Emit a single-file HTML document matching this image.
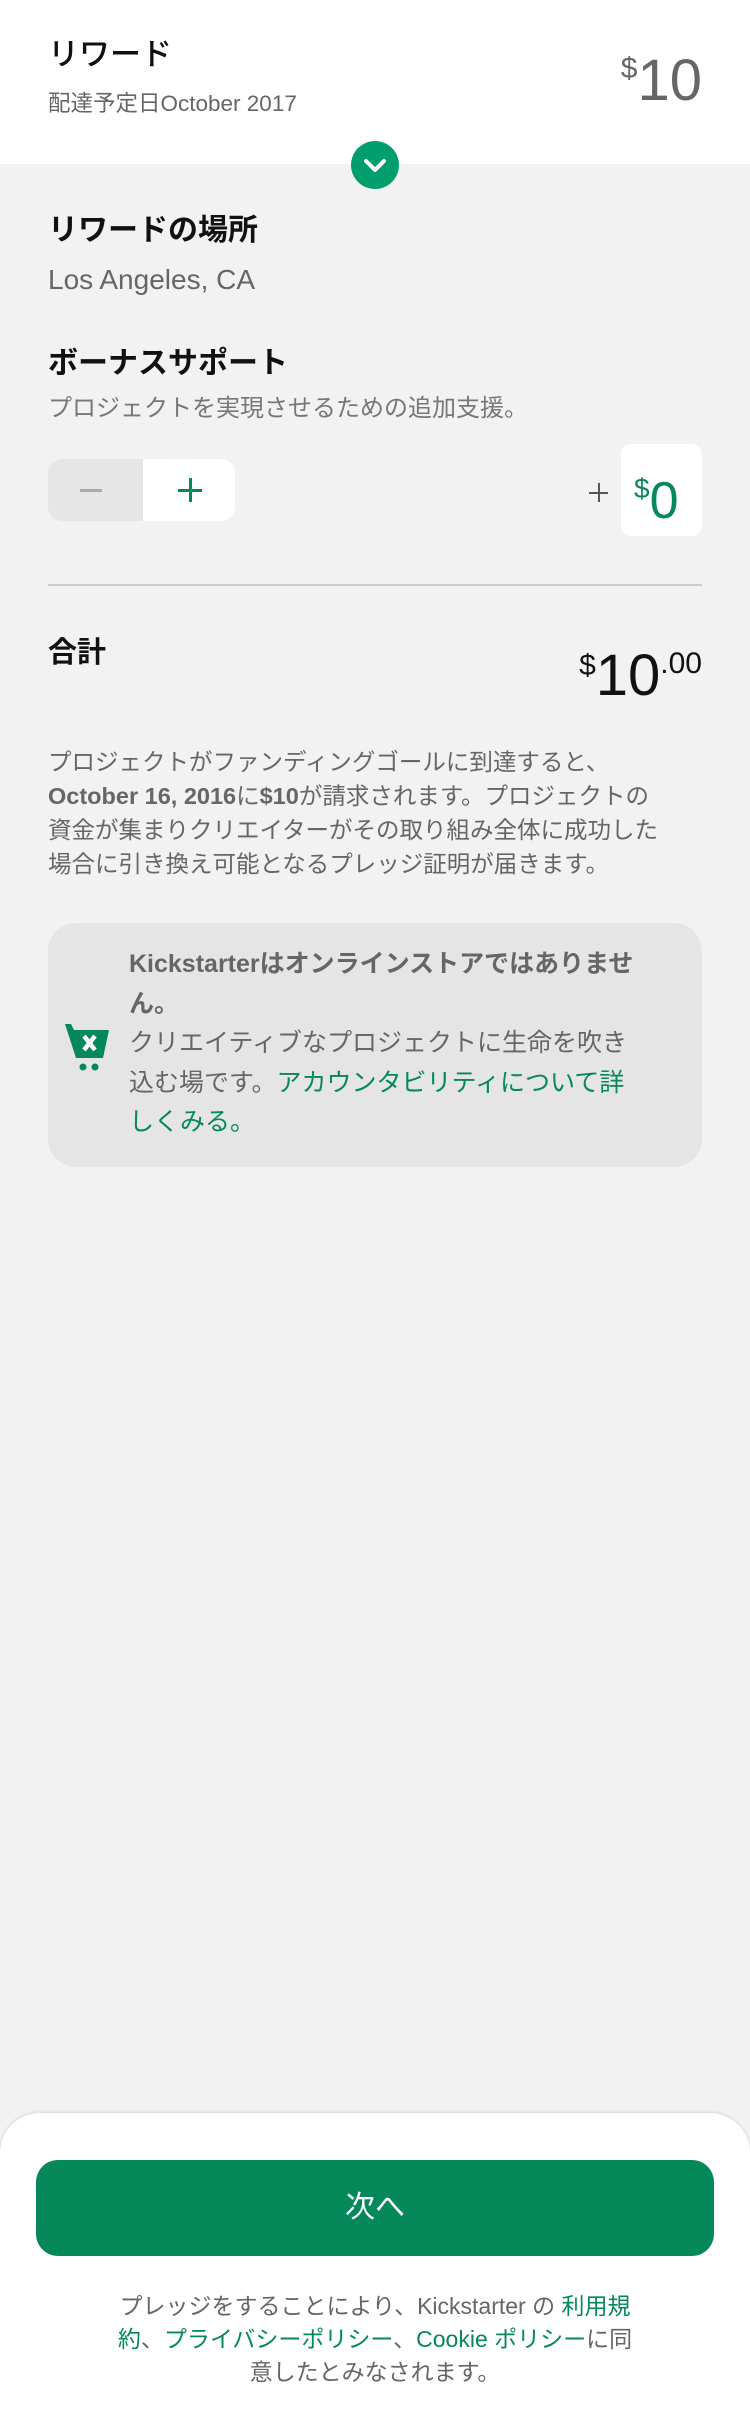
<!DOCTYPE html>
<html><head><meta charset="utf-8"><style>
*{margin:0;padding:0;box-sizing:border-box}
body{width:750px;height:2400px;background:#f2f2f2;font-family:"Liberation Sans","Noto Sans CJK JP",sans-serif;position:relative;overflow:hidden;color:#111}
.a{position:absolute;white-space:nowrap}
.g{color:#05885a}
</style></head><body>
<div class="a" style="left:0;top:0;width:750px;height:164px;background:#fff"></div>
<div class="a" style="left:48px;top:33px;font-size:31px;line-height:44px;font-weight:500">リワード</div>
<div class="a" style="left:48px;top:89px;font-size:22.5px;line-height:30px;color:#666">配達予定日October 2017</div>
<div class="a" style="right:48px;top:36px;font-size:58px;line-height:66px;color:#666"><span style="font-size:30px;vertical-align:22px">$</span>10</div>
<div class="a" style="left:351px;top:141px;width:48px;height:48px;border-radius:50%;background:#009e6c"><svg width="48" height="48"><path d="M15 20 L24 29 L33 20" stroke="#fff" stroke-width="4" fill="none" stroke-linecap="round" stroke-linejoin="round"/></svg></div>

<div class="a" style="left:48px;top:210px;font-size:30px;line-height:42px;font-weight:bold">リワードの場所</div>
<div class="a" style="left:48px;top:262px;font-size:28px;line-height:36px;color:#666">Los Angeles, CA</div>
<div class="a" style="left:48px;top:343px;font-size:30px;line-height:42px;font-weight:bold">ボーナスサポート</div>
<div class="a" style="left:48px;top:393px;font-size:24px;line-height:32px;color:#777">プロジェクトを実現させるための追加支援。</div>

<div class="a" style="left:48px;top:459px;width:187px;height:62px;border-radius:14px;overflow:hidden;background:#fff">
<div style="position:absolute;left:0;top:0;width:95px;height:62px;background:#e6e6e6"></div>
<div style="position:absolute;left:32px;top:30px;width:22px;height:3px;background:#aaa"></div>
<div style="position:absolute;left:130px;top:30px;width:24px;height:3px;background:#05885a"></div>
<div style="position:absolute;left:140.5px;top:19px;width:3px;height:24px;background:#05885a"></div>
</div>
<div class="a" style="left:589px;top:492px;width:19px;height:2px;background:#555"></div>
<div class="a" style="left:597.5px;top:483px;width:2px;height:19px;background:#555"></div>
<div class="a" style="left:621px;top:444px;width:81px;height:92px;border-radius:10px;background:#fff"></div>
<div class="a g" style="left:634px;top:456px;font-size:52px;line-height:66px;color:#06885a"><span style="font-size:28px;vertical-align:20px">$</span>0</div>
<div class="a" style="left:48px;top:584px;width:654px;height:2px;background:#ccc"></div>

<div class="a" style="left:48px;top:632px;font-size:29px;line-height:42px;font-weight:bold">合計</div>
<div class="a" style="right:48px;top:630px;font-size:58px;line-height:68px;color:#111"><span style="font-size:30px;vertical-align:20px">$</span>10<span style="font-size:30px;vertical-align:22px">.00</span></div>

<div class="a" style="left:48px;top:745px;font-size:23.5px;line-height:34px;color:#666;white-space:normal;width:660px">プロジェクトがファンディングゴールに到達すると、<br><b>October 16, 2016</b>に<b>$10</b>が請求されます。プロジェクトの<br>資金が集まりクリエイターがその取り組み全体に成功した<br>場合に引き換え可能となるプレッジ証明が届きます。</div>

<div class="a" style="left:48px;top:923px;width:654px;height:244px;border-radius:28px;background:#e5e5e5"></div>
<div class="a" style="left:129px;top:945px;font-size:25px;line-height:39.5px;color:#666;white-space:normal;width:560px"><b>Kickstarterはオンラインストアではありませ<br>ん。</b><br>クリエイティブなプロジェクトに生命を吹き<br>込む場です。<span class="g">アカウンタビリティについて詳<br>しくみる。</span></div>
<svg class="a" style="left:63px;top:1020px" width="50" height="56" viewBox="0 0 50 56"><path d="M2 4 H8 L11 10 H46 L40 38 H13 Z" fill="#05885a"/><path d="M21 16 L32 30 M32 16 L21 30" stroke="#fff" stroke-width="4.5"/><circle cx="20" cy="47" r="3.5" fill="#05885a"/><circle cx="32" cy="47" r="3.5" fill="#05885a"/></svg>

<div class="a" style="left:0;top:2113px;width:750px;height:300px;background:#fff;border-radius:40px 40px 0 0;box-shadow:0 -1px 3px rgba(0,0,0,.12)"></div>
<div class="a" style="left:36px;top:2160px;width:678px;height:96px;border-radius:22px;background:#05885a;color:#fff;font-size:30px;line-height:96px;text-align:center">次へ</div>
<div class="a" style="left:30px;top:2290px;width:690px;font-size:23px;line-height:33px;color:#666;text-align:center;white-space:normal">プレッジをすることにより、Kickstarter の <span class="g">利用規<br>約</span>、<span class="g">プライバシーポリシー</span>、<span class="g">Cookie ポリシー</span>に同<br>意したとみなされます。</div>
</body></html>
